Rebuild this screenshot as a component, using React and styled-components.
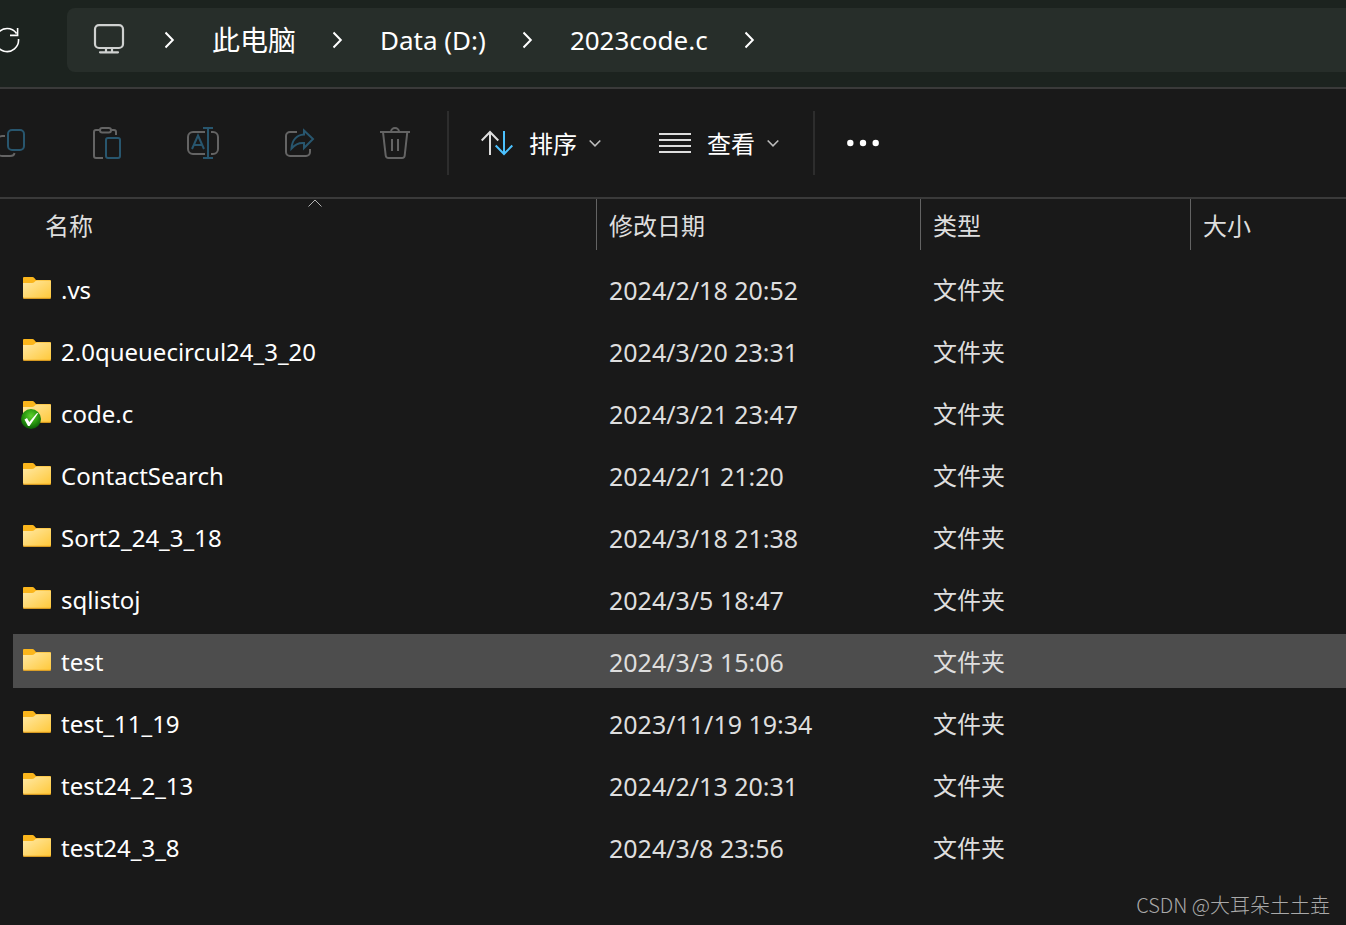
import styled, { createGlobalStyle } from "styled-components";

const GlobalStyles = createGlobalStyle`
  :root {
    --color-base: #191919;
    --color-titlebar: #1c231f;
    --color-address: #272e2a;
    --color-line: #3a3a3a;
    --color-divider: #2d2d2d;
    --color-column: #636363;
    --color-hover: #4d4d4d;
    --color-text: #ffffff;
    --color-text-soft: #dedede;
    --color-icon-off: #646464;
    --color-accent-off: #28566e;
    --color-accent: #4cc2ff;
  }

  * {
    box-sizing: border-box;
    margin: 0;
    padding: 0;
  }

  body {
    background-color: var(--color-base);
    color: var(--color-text);
    font-family: "Noto Sans", "Noto Sans CJK SC", sans-serif;
    font-size: 24px;
    line-height: 32px;
    overflow-x: hidden;
  }

  button {
    background: none;
    border: none;
    color: inherit;
    font: inherit;
    cursor: pointer;
  }

  svg {
    display: block;
    flex-shrink: 0;
  }
`;

const StyledWindow = styled.div`
  position: relative;
  min-height: 100vh;
  overflow: hidden;
`;

const TitleBar = styled.header`
  display: flex;
  align-items: center;
  gap: 44px;
  padding: 8px 0 15px;
  background-color: var(--color-titlebar);
  border-bottom: 2px solid var(--color-line);
`;

const RefreshButton = styled.button`
  margin-left: -9px;
`;

const AddressBar = styled.nav`
  display: flex;
  flex: 1;
  align-items: center;
  gap: 40px;
  height: 64px;
  padding-left: 26px;
  border-radius: 8px 0 0 8px;
  background-color: var(--color-address);
`;

const Crumbs = styled.ol`
  display: flex;
  align-items: center;
  gap: 37px;
  list-style: none;
`;

const Crumb = styled.li`
  display: flex;
  align-items: center;
  gap: 37px;
  font-size: ${(props) => (props.$cjk ? "28px" : "26px")};
  white-space: nowrap;
`;

const Toolbar = styled.div`
  display: flex;
  align-items: center;
  height: 110px;
  border-bottom: 2px solid var(--color-line);
`;

const Actions = styled.div`
  display: flex;
  margin: 0 4px 0 -37px;
`;

const ActionButton = styled.button`
  display: grid;
  place-items: center;
  width: 96px;
  height: 64px;
`;

const Divider = styled.span`
  width: 2px;
  height: 64px;
  background-color: var(--color-divider);
`;

const Menus = styled.div`
  display: flex;
  gap: 26px;
  padding: 0 18px 0 16px;
`;

const MenuButton = styled.button`
  display: flex;
  align-items: center;
  height: 64px;
  padding: 0 16px;
  white-space: nowrap;

  span {
    margin: 0 12px 0 16px;
    padding-top: 2px;
  }
`;

const FileTable = styled.table`
  width: calc(100% - 13px);
  margin-left: 13px;
  table-layout: fixed;
  border-collapse: separate;
  border-spacing: 0;
`;

const Column = styled.col`
  width: ${(props) => props.$width};
`;

const HeadCell = styled.th`
  height: 59px;
  padding-left: ${(props) => (props.$first ? "19px" : "0")};
  vertical-align: top;
  font-weight: 400;
`;

const SortButton = styled.button`
  position: relative;
  display: block;
  width: 100%;
  height: 51px;
  padding: 2px 12px 0;
  border-left: 1px solid
    ${(props) => (props.$first ? "transparent" : "var(--color-column)")};
  color: var(--color-text-soft);
  text-align: left;
`;

const SortMark = styled.svg`
  position: absolute;
  top: 0;
  left: 50%;
  transform: translateX(-50%);
`;

const Row = styled.tr`
  --row-color: ${(props) => (props.$active ? "var(--color-hover)" : "transparent")};
`;

const Cell = styled.td`
  height: 62px;
  padding: 2px 0 0 13px;
  border: solid transparent;
  border-width: 4px 0;
  background-color: var(--row-color);
  background-clip: padding-box;
  color: var(--color-text-soft);
  white-space: nowrap;
`;

const NameCell = styled(Cell)`
  padding-left: 10px;
  color: var(--color-text);
`;

const DateCell = styled(Cell)`
  font-size: 25px;
`;

const FileName = styled.div`
  display: flex;
  align-items: center;
  gap: 10px;
`;

const FolderSvg = styled.svg`
  margin-bottom: 2px;
  overflow: visible;
`;

const Watermark = styled.p`
  position: absolute;
  right: 16px;
  bottom: 4px;
  color: #a9a9a9;
  font-family: "Noto Sans CJK SC", sans-serif;
  font-size: 20px;
  font-weight: 300;
`;

const grey = { stroke: "var(--color-icon-off)" };
const blue = { stroke: "var(--color-accent-off)" };

const crumbs = [
  { name: "此电脑", cjk: true },
  { name: "Data (D:)" },
  { name: "2023code.c" },
];

const actions = [
  {
    label: "复制",
    icon: (
      <>
        <path {...grey} d="M10 9H7a4 4 0 0 0-4 4v12a4 4 0 0 0 4 4h8q4 0 4.500-3" />
        <rect {...blue} x="13" y="3" width="16" height="20" rx="4" />
      </>
    ),
  },
  {
    label: "粘贴",
    icon: (
      <>
        <path {...grey} d="M9 3H5a2 2 0 0 0-2 2v24a2 2 0 0 0 2 2h7M20 3h3q2 0 2 2v3" />
        <rect {...grey} x="9" y="1" width="11" height="4.500" rx="2.200" />
        <rect {...blue} x="15" y="11" width="14" height="20" rx="2" />
      </>
    ),
  },
  {
    label: "重命名",
    icon: (
      <>
        <path
          {...grey}
          d="M18 5H6a5 5 0 0 0-5 5v12a5 5 0 0 0 5 5h12M24 5h2a5 5 0 0 1 5 5v12a5 5 0 0 1-5 5h-2"
        />
        <path {...blue} d="M16 1h10M16 31h10M21 1v30M5 22l6-13.500L17 22M7 18h8" />
      </>
    ),
  },
  {
    label: "共享",
    icon: (
      <>
        <path {...grey} d="M14 5H7a4 4 0 0 0-4 4v16a4 4 0 0 0 4 4h16a4 4 0 0 0 4-4v-3" />
        <path
          {...blue}
          d="M21 3.500 30 12l-9 9v-5c-5-.500-9 1.500-12.500 5.500C9 13 14 8 21 7.500Z"
        />
      </>
    ),
  },
  {
    label: "删除",
    icon: (
      <path
        {...grey}
        d="M1 5h30M12 5a4 4 0 0 1 8 0M4 5l2.700 23.500Q7 31 9.500 31h13.500q2.500 0 2.700-2.500L28.300 5M13 12v12M19 12v12"
      />
    ),
  },
];

const columns = [
  { name: "名称", width: "583px", sorted: true },
  { name: "修改日期", width: "324px" },
  { name: "类型", width: "270px" },
  { name: "大小", width: "auto" },
];

const files = [
  { name: ".vs", date: "2024/2/18 20:52" },
  { name: "2.0queuecircul24_3_20", date: "2024/3/20 23:31" },
  { name: "code.c", date: "2024/3/21 23:47", synced: true },
  { name: "ContactSearch", date: "2024/2/1 21:20" },
  { name: "Sort2_24_3_18", date: "2024/3/18 21:38" },
  { name: "sqlistoj", date: "2024/3/5 18:47" },
  { name: "test", date: "2024/3/3 15:06", active: true },
  { name: "test_11_19", date: "2023/11/19 19:34" },
  { name: "test24_2_13", date: "2024/2/13 20:31" },
  { name: "test24_3_8", date: "2024/3/8 23:56" },
];

function Icon({ children, color = "#dedede" }) {
  return (
    <svg
      width="32"
      height="32"
      viewBox="0 0 32 32"
      fill="none"
      stroke={color}
      strokeWidth="2"
      aria-hidden="true"
    >
      {children}
    </svg>
  );
}

function ChevronRight() {
  return (
    <svg width="10" height="18" viewBox="0 0 10 18" fill="none" aria-hidden="true">
      <path d="M.500 1.500 7.800 9 .500 16.500" stroke="#fff" strokeWidth="2" />
    </svg>
  );
}

function ChevronDown() {
  return (
    <svg width="12" height="8" viewBox="0 0 12 8" fill="none" aria-hidden="true">
      <path d="m.700 1.500 5.300 5.300 5.300-5.300" stroke="#bcbcbc" strokeWidth="1.600" />
    </svg>
  );
}

function FolderIcon({ synced }) {
  return (
    <FolderSvg width="28" height="24" viewBox="0 0 28 24" aria-hidden="true">
      <defs>
        <linearGradient id="folder" x1="0" y1="0" x2="1" y2="1">
          <stop offset="0" stopColor="#ffe9a6" />
          <stop offset="1" stopColor="#ffc839" />
        </linearGradient>
        <radialGradient id="synced" cx="0.5" cy="0.35" r="0.65">
          <stop offset="0" stopColor="#5fd02c" />
          <stop offset="0.55" stopColor="#2a9a10" />
          <stop offset="1" stopColor="#0b5c05" />
        </radialGradient>
      </defs>
      <path d="M0 1q0-1 1-1h8.500q1 0 1.800 1l1.700 2h14q1 0 1 1v8H0Z" fill="#fbb61c" />
      <path
        d="M0 6h9q1.500 0 2.500-1l1-1q.500-.500 1.500-.500h13q1 0 1 1V20q0 1.500-1 1.500H1q-1 0-1-1.500Z"
        fill="url(#folder)"
      />
      <path d="M0 20.200q0 1.500 1 1.500h26q1 0 1-1.500l-1 .500H1Z" fill="#eda51b" />
      {synced && (
        <>
          <circle cx="8" cy="18" r="10" fill="url(#synced)" />
          <path d="M1.500 18.500 4 17l2.300 4L13.500 12.500l2-.800L6.500 25H5Z" fill="#fff" />
        </>
      )}
    </FolderSvg>
  );
}

function App() {
  return (
    <>
      <GlobalStyles />
      <StyledWindow>
        <TitleBar>
          <RefreshButton aria-label="刷新">
            <Icon color="#fff">
              <path
                d="M27.500 15a11.500 11.500 0 1 1-2-5.500M26.600 4v7.400H19"
                strokeWidth="1.600"
              />
            </Icon>
          </RefreshButton>
          <AddressBar aria-label="地址">
            <Icon color="#cfd1d0">
              <rect x="2" y="1.200" width="28" height="22.800" rx="4" strokeWidth="2.200" />
              <path d="M13 24v4M19 24v4M7 28.300h18" strokeWidth="2.200" strokeLinecap="round" />
            </Icon>
            <Crumbs>
              {crumbs.map((crumb) => (
                <Crumb key={crumb.name} $cjk={crumb.cjk}>
                  <ChevronRight />
                  <button>{crumb.name}</button>
                </Crumb>
              ))}
              <Crumb>
                <ChevronRight />
              </Crumb>
            </Crumbs>
          </AddressBar>
        </TitleBar>

        <Toolbar role="toolbar">
          <Actions>
            {actions.map((action) => (
              <ActionButton key={action.label} aria-label={action.label}>
                <Icon>{action.icon}</Icon>
              </ActionButton>
            ))}
          </Actions>
          <Divider />
          <Menus>
            <MenuButton>
              <Icon>
                <path d="M9 28V5M.700 13.500 9 5l8.300 8.500" />
                <path
                  d="M23 4v23M14.700 18.500 23 27l8.300-8.500"
                  stroke="var(--color-accent)"
                />
              </Icon>
              <span>排序</span>
              <ChevronDown />
            </MenuButton>
            <MenuButton>
              <Icon>
                <path d="M0 7h32M0 13h32M0 19h32M0 25h32" />
              </Icon>
              <span>查看</span>
              <ChevronDown />
            </MenuButton>
          </Menus>
          <Divider />
          <ActionButton aria-label="查看更多">
            <Icon>
              <g fill="#fff" stroke="none">
                <circle cx="3.300" cy="16" r="3.200" />
                <circle cx="16" cy="16" r="3.200" />
                <circle cx="28.700" cy="16" r="3.200" />
              </g>
            </Icon>
          </ActionButton>
        </Toolbar>

        <FileTable>
          <colgroup>
            {columns.map((column) => (
              <Column key={column.name} $width={column.width} />
            ))}
          </colgroup>
          <thead>
            <tr>
              {columns.map((column) => (
                <HeadCell key={column.name} scope="col" $first={column.sorted}>
                  <SortButton $first={column.sorted}>
                    {column.name}
                    {column.sorted && (
                      <SortMark width="14" height="8" viewBox="0 0 14 8" fill="none">
                        <path d="m.500 7.500 6.500-6.500 6.500 6.500" stroke="#b4b4b4" />
                      </SortMark>
                    )}
                  </SortButton>
                </HeadCell>
              ))}
            </tr>
          </thead>
          <tbody>
            {files.map((file) => (
              <Row key={file.name} $active={file.active}>
                <NameCell>
                  <FileName>
                    <FolderIcon synced={file.synced} />
                    {file.name}
                  </FileName>
                </NameCell>
                <DateCell>{file.date}</DateCell>
                <Cell>文件夹</Cell>
                <Cell />
              </Row>
            ))}
          </tbody>
        </FileTable>

        <Watermark>CSDN @大耳朵土土垚</Watermark>
      </StyledWindow>
    </>
  );
}

export default App;
